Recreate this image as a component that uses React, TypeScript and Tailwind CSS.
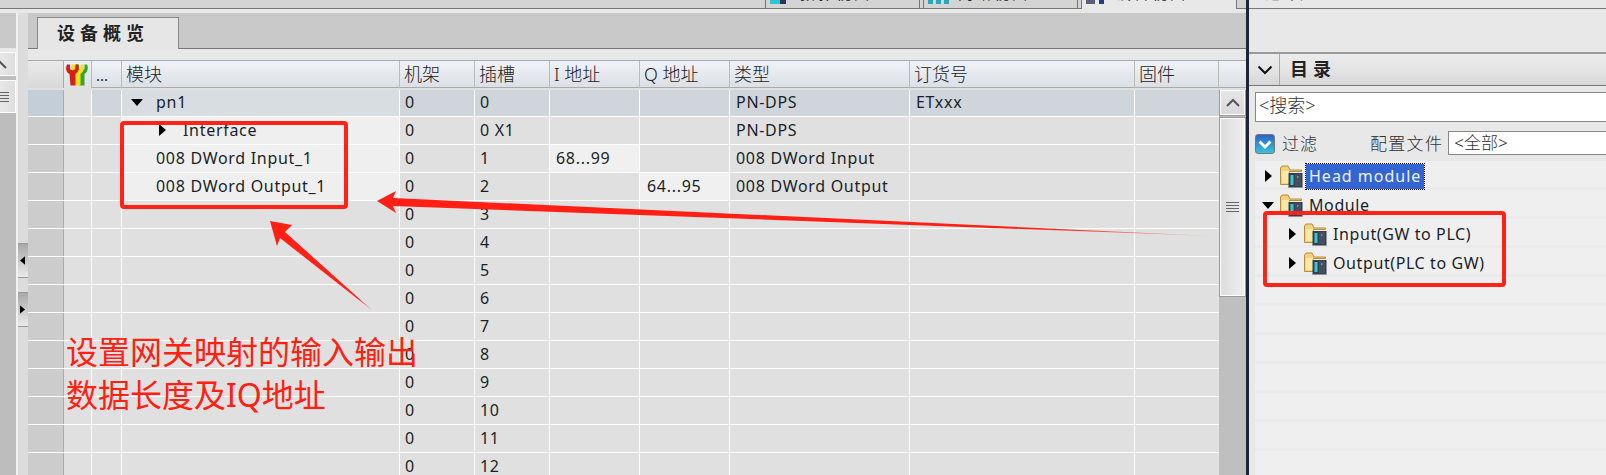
import React from "react";

const COLS = "grid-cols-[36px_28px_30px_278px_75px_75px_90px_90px_180px_225px_84px]";
const LATIN = "font-['Noto_Sans','Noto_Sans_CJK_SC',sans-serif]";

function Tri({ dir, className = "" }: { dir: "right" | "down" | "left"; className?: string }) {
  const pts = dir === "right" ? "0,0 7,6 0,12" : dir === "left" ? "7,0 0,6 7,12" : "0,0 12,0 6,7";
  const w = dir === "down" ? 12 : 7;
  const h = dir === "down" ? 7 : 12;
  return (
    <svg width={w} height={h} viewBox={`0 0 ${w} ${h}`} className={`shrink-0 ${className}`}>
      <polygon points={pts} fill="#000" />
    </svg>
  );
}

function FolderIcon({ className = "" }: { className?: string }) {
  return (
    <svg width="23" height="23" viewBox="0 0 23 23" className={`shrink-0 ${className}`}>
      <path d="M0.5 3 L0.5 19.5 L9 19.5 L9 6.5 L21.5 6.5 L21.5 5 L10 5 L8 1 L2 1 Z" fill="#f3d27c" stroke="#b98d3c" />
      <rect x="2" y="6" width="7" height="12" fill="#fbe7a8" />
      <rect x="8.5" y="8" width="14" height="14.5" fill="#343f50" />
      <rect x="8.5" y="22" width="14" height="1" fill="#8b93a0" />
      <rect x="10.5" y="10" width="3" height="10" fill="#35c6d8" />
      <rect x="15" y="9" width="6" height="12" fill="#454f60" />
      <rect x="17" y="11" width="1.5" height="2" fill="#7d8796" />
    </svg>
  );
}

function Wrench({ color, dx }: { color: string; dx: number }) {
  return (
    <path
      transform={`translate(${dx} 0)`}
      d="M1 0.5 C-0.5 3 -0.5 8 3.5 10 L4.5 21.5 L9.5 21.5 L9.5 10 C13 8 13.5 3 12 0.5 L9.5 0.5 L9.5 5 L6.5 6.5 L4 5 L4 0.5 Z"
      fill={color}
    />
  );
}

function WrenchIcon() {
  return (
    <svg width="22" height="23" viewBox="0 0 22 23" className="-ml-[2px]">
      <Wrench color="#35a62d" dx={9} />
      <Wrench color="#f4dc1e" dx={5} />
      <Wrench color="#d3201a" dx={0} />
    </svg>
  );
}

function ChevronUp({ w = 14 }: { w?: number }) {
  return (
    <svg width={w} height="9" viewBox="0 0 14 9">
      <path d="M1 8 L7 2 L13 8" fill="none" stroke="#555" strokeWidth="2" />
    </svg>
  );
}

function Grip() {
  return (
    <div className="flex flex-col gap-[2px] w-[13px]">
      <div className="h-px bg-[#666]" />
      <div className="h-px bg-[#666]" />
      <div className="h-px bg-[#666]" />
      <div className="h-px bg-[#666]" />
    </div>
  );
}

function TopTab({ w, label, active, icon }: { w: string; label: string; active?: boolean; icon: React.ReactNode }) {
  return (
    <div className={`${w} h-[9px] overflow-hidden flex items-start border-x border-[#777] ${active ? "bg-[#e8e8e8]" : "bg-[#d4d4d4] border-b"}`}>
      <div className="pl-[4px] shrink-0 w-[34px]">{icon}</div>
      <span className="text-[15px] leading-[18px] tracking-[3px] text-[#222] -mt-[16px] whitespace-nowrap">{label}</span>
    </div>
  );
}

type Row = { slot: string; mod?: React.ReactNode; i?: string; q?: string; type?: string };

const rows: Row[] = [
  { slot: "0 X1", mod: <span className="flex items-center pl-[37px] gap-[17px]"><Tri dir="right" /><span>Interface</span></span>, type: "PN-DPS" },
  { slot: "1", mod: <span className="pl-[34px]">008 DWord Input_1</span>, i: "68...99", type: "008 DWord Input" },
  { slot: "2", mod: <span className="pl-[34px]">008 DWord Output_1</span>, q: "64...95", type: "008 DWord Output" },
  ...["3", "4", "5", "6", "7", "8", "9", "10", "11", "12"].map((s) => ({ slot: s })),
];

const headers = ["模块", "机架", "插槽", "I 地址", "Q 地址", "类型", "订货号", "固件"];

function HeaderRow() {
  return (
    <div className={`grid ${COLS} h-[28px] border-y border-[#aaa] bg-gradient-to-b from-[#f0f3f7] to-[#dbe0e6]`}>
      <div className="bg-gradient-to-b from-[#eaeaea] to-[#d8d8d8] border-r border-[#aaa]" />
      <div className="border-r border-[#bbb] flex items-center justify-center bg-gradient-to-b from-[#eef0f2] to-[#dde0e4]"><WrenchIcon /></div>
      <div className="border-r border-[#bbb] flex items-center pl-[4px] text-[15px] text-[#222]">...</div>
      {headers.map((h, i) => (
        <div key={i} className="border-r border-[#bbb] flex items-center pl-[4px] pb-[1px] text-[18px] font-light text-[#222] whitespace-nowrap">
          {h}
        </div>
      ))}
    </div>
  );
}

function Cell({ className = "", children }: { className?: string; children?: React.ReactNode }) {
  return <div className={`border-r border-white flex items-center pl-[5px] pb-[2px] whitespace-nowrap overflow-hidden ${className}`}>{children}</div>;
}

function BodyRows() {
  const txt = "text-[16px] tracking-[0.7px] text-[#1a1f28]";
  return (
    <div className={`flex-1 min-w-0 overflow-hidden ${txt}`}>
      <div className={`grid ${COLS} h-[27px] border-b border-[#fff]`}>
        <div className="bg-[#c3ced8] border-r border-[#aaa]" />
        <div className="bg-[#e0e0e0] border-r border-white" />
        <div className="bg-[#cfd5da] border-r border-white" />
        <div className="bg-[#d8dde2] border-r border-white flex items-center pl-[9px] pb-[2px] gap-[13px]"><Tri dir="down" /><span>pn1</span></div>
        <Cell className="bg-[#cfd5da]">0</Cell>
        <Cell className="bg-[#cfd5da]">0</Cell>
        <Cell className="bg-[#cfd5da]" />
        <Cell className="bg-[#cfd5da]" />
        <Cell className="bg-[#cfd5da] pl-[6px]">PN-DPS</Cell>
        <Cell className="bg-[#cfd5da] pl-[6px]">ETxxx</Cell>
        <Cell className="bg-[#cfd5da] border-r-0" />
      </div>
      {rows.map((r, idx) => (
        <div key={idx} className={`grid ${COLS} h-[28px] border-b border-white`}>
          <div className="bg-[#cccccc] border-r border-[#aaa]" />
          <div className="bg-[#e0e0e0] border-r border-white" />
          <div className="bg-[#e0e0e0] border-r border-white" />
          <div className={`${idx < 3 ? "bg-[#efefef]" : "bg-[#e0e0e0]"} border-r border-white flex items-center pb-[2px] overflow-hidden whitespace-nowrap`}>{r.mod}</div>
          <Cell className="bg-[#e0e0e0]">0</Cell>
          <Cell className="bg-[#e0e0e0]">{r.slot}</Cell>
          <Cell className={r.i ? "bg-[#f0f0f0] pl-[6px]" : "bg-[#e0e0e0]"}>{r.i}</Cell>
          <Cell className={r.q ? "bg-[#f0f0f0] pl-[7px]" : "bg-[#e0e0e0]"}>{r.q}</Cell>
          <Cell className="bg-[#e0e0e0] pl-[6px]">{r.type}</Cell>
          <Cell className="bg-[#e0e0e0]" />
          <Cell className="bg-[#e0e0e0] border-r-0" />
        </div>
      ))}
    </div>
  );
}

function TableScrollbar() {
  return (
    <div className="w-[27px] shrink-0 bg-[#bfbfbf] flex flex-col -mt-px">
      <div className="h-[27px] bg-gradient-to-b from-[#e6e6e6] to-[#d9d9d9] border border-[#999] outline outline-1 -outline-offset-2 outline-white flex items-center justify-center mb-[1px]">
        <ChevronUp />
      </div>
      <div className="h-[180px] bg-gradient-to-r from-[#dcdcdc] to-[#efefef] border border-[#999] outline outline-1 -outline-offset-2 outline-white flex items-center justify-center">
        <Grip />
      </div>
    </div>
  );
}

function LeftRail() {
  return (
    <div className="w-[28px] shrink-0 flex self-stretch">
      <div className="w-[16px] bg-[#bdbdbd] flex flex-col">
        <div className="h-[35px] bg-[#c9c9c9]" />
        <div className="h-[4px] bg-[#e8e8e8]" />
        <div className="h-[24px] bg-gradient-to-r from-[#e8e8e8] to-[#dedede] border-y border-r border-white flex items-center overflow-hidden">
          <div className="-ml-[7px]"><ChevronUp /></div>
        </div>
        <div className="h-[4px]" />
        <div className="h-[33px] bg-gradient-to-r from-[#e8e8e8] to-[#dedede] border-y border-r border-white flex items-center overflow-hidden">
          <div className="-ml-[4px]"><Grip /></div>
        </div>
      </div>
      <div className="w-[2px] bg-[#f2f2f2]" />
      <div className="w-[10px] bg-[#dcdcdc] flex flex-col pt-[230px]">
        <div className="h-[35px] bg-gradient-to-b from-[#a8a8a8] to-[#ebebeb] border-y border-[#999] flex items-center pl-[2px]"><Tri dir="left" className="w-[5px] h-[9px]" /></div>
        <div className="h-[14px]" />
        <div className="h-[35px] bg-gradient-to-b from-[#a8a8a8] to-[#ebebeb] border-y border-[#999] flex items-center pl-[2px]"><Tri dir="right" className="w-[5px] h-[9px]" /></div>
      </div>
    </div>
  );
}

function TreeRow({ children }: { children?: React.ReactNode }) {
  return <div className="h-[29px] shrink-0 border-b-[3px] border-[#eaeaea] flex items-center pt-[4px] whitespace-nowrap">{children}</div>;
}

function RightPanel() {
  return (
    <div className="flex-1 min-w-0 bg-[#e8e8e8] flex flex-col">
      <div className="h-[9px] border-b border-[#777] overflow-hidden pl-[16px]">
        <div className="text-[18px] leading-[20px] -mt-[18px] tracking-[2px] text-[#222]">选项</div>
      </div>
      <div className="h-[43px]" />
      <div className="h-[2px] bg-[#999]" />
      <div className="h-[32px] border-b border-[#777] bg-gradient-to-b from-[#ececec] via-[#e4e4e4] to-[#d6d6d6] flex items-stretch">
        <div className="w-[31px] border-r border-[#aaa] flex items-center justify-center pl-[2px]">
          <svg width="16" height="10" viewBox="0 0 16 10"><path d="M1.5 1.5 L8 8 L14.5 1.5" fill="none" stroke="#111" strokeWidth="2" /></svg>
        </div>
        <div className="pl-[10px] flex items-center text-[18px] font-bold tracking-[5px] text-[#222]">目录</div>
      </div>
      <div className="pl-[6px] pt-[6px] flex flex-col flex-1 min-h-0 overflow-hidden">
        <div className="h-[30px] shrink-0 bg-white border border-[#888] border-r-0 flex items-center pl-[3px] pb-[3px] text-[18px] font-light text-[#333]">&lt;搜索&gt;</div>
        <div className="h-[39px] shrink-0 flex items-center pt-[5px]">
          <div className="w-[20px] h-[20px] rounded-[3px] bg-gradient-to-b from-[#2c62c4] to-[#3cc0dc] border border-[#777] flex items-center justify-center shrink-0">
            <svg width="14" height="11" viewBox="0 0 14 11"><path d="M1.5 2.5 L7 8 L12.5 2.5" fill="none" stroke="#fff" strokeWidth="3" /></svg>
          </div>
          <span className="ml-[7px] text-[17px] font-light tracking-[1px] text-[#333]">过滤</span>
          <span className="ml-[52px] text-[17px] font-light tracking-[1.3px] text-[#333]">配置文件</span>
          <div className="ml-[5px] flex-1 h-[24px] -mt-[2px] bg-white border border-[#888] border-r-0 flex items-center pl-[5px] text-[17px] font-light text-[#333]">&lt;全部&gt;</div>
        </div>
        <div className="flex-1 min-h-0 overflow-hidden bg-[#efefef] text-[16px] tracking-[0.6px] text-[#1a1f28]">
          <TreeRow>
            <Tri dir="right" className="ml-[10px]" />
            <FolderIcon className="ml-[8px]" />
            <span className="ml-[3px] h-[25px] px-[3px] bg-[#3264d2] text-[#eef2ff] tracking-[1px] outline-dotted outline-1 outline-black flex items-center">Head module</span>
          </TreeRow>
          <TreeRow>
            <Tri dir="down" className="ml-[7px]" />
            <FolderIcon className="ml-[6px]" />
            <span className="ml-[6px]">Module</span>
          </TreeRow>
          <TreeRow>
            <Tri dir="right" className="ml-[34px]" />
            <FolderIcon className="ml-[8px]" />
            <span className="ml-[6px]">Input(GW to PLC)</span>
          </TreeRow>
          <TreeRow>
            <Tri dir="right" className="ml-[34px]" />
            <FolderIcon className="ml-[8px]" />
            <span className="ml-[6px]">Output(PLC to GW)</span>
          </TreeRow>
          {[0, 1, 2, 3, 4, 5, 6].map((i) => <TreeRow key={i} />)}
        </div>
      </div>
    </div>
  );
}

function Annotations() {
  return (
    <div className="absolute inset-0 pointer-events-none">
      <svg width="1606" height="475" viewBox="0 0 1606 475" className="absolute inset-0">
        <defs>
          <linearGradient id="fade" x1="377" y1="0" x2="1212" y2="0" gradientUnits="userSpaceOnUse">
            <stop offset="0.8" stopColor="#ff1f14" />
            <stop offset="1" stopColor="#ff1f14" stopOpacity="0.25" />
          </linearGradient>
          <linearGradient id="fade2" x1="270" y1="221" x2="373" y2="311" gradientUnits="userSpaceOnUse">
            <stop offset="0.85" stopColor="#ff1f14" />
            <stop offset="1" stopColor="#ff1f14" stopOpacity="0.3" />
          </linearGradient>
        </defs>
        <polygon points="377,201 396,191 393,198 1212,236 393,206 396,213" fill="url(#fade)" />
        <polygon points="270,221 292,225 285,232 373,311 280,238 277,246" fill="url(#fade2)" />
      </svg>
      <div className="absolute left-[120px] top-[121px] w-[228px] h-[88px] border-[4px] border-[#ff2317] rounded-[4px]" />
      <div className="absolute left-[1263px] top-[211px] w-[243px] h-[76px] border-[4px] border-[#ff2317] rounded-[4px]" />
      <div className="absolute left-[66px] top-[330px] text-[32px] leading-[43px] text-[#ff2012] whitespace-nowrap">
        <div>设置网关映射的输入输出</div>
        <div>数据长度及IQ地址</div>
      </div>
    </div>
  );
}

export default function App() {
  return (
    <div className={`relative w-[1606px] h-[475px] overflow-hidden flex bg-[#e8e8e8] ${LATIN}`}>
      <div className="w-[1246px] shrink-0 flex flex-col">
        <div className="h-[9px] flex justify-end bg-[#d4d4d4] border-b border-[#777] pr-[9px] gap-[3px]">
          <TopTab
            w="w-[155px]"
            label="拓扑视图"
            icon={
              <div className="flex h-[4px] w-[16px]">
                <div className="w-[10px] bg-[#2fc4d4]" />
                <div className="w-[6px] bg-[#27345a]" />
              </div>
            }
          />
          <TopTab
            w="w-[155px]"
            label="网络视图"
            icon={
              <div className="flex gap-[3px] h-[4px]">
                <div className="w-[5px] bg-[#2aa6b8]" />
                <div className="w-[5px] bg-[#2aa6b8]" />
                <div className="w-[5px] bg-[#2aa6b8]" />
              </div>
            }
          />
          <TopTab
            w="w-[156px]"
            label="设备视图"
            active
            icon={
              <div className="flex gap-[4px] h-[4px]">
                <div className="w-[9px] bg-[#5a6078]" />
                <div className="w-[5px] bg-[#1d3f80]" />
              </div>
            }
          />
        </div>
        <div className="h-[4px] bg-[#e8e8e8]" />
        <div className="flex-1 min-h-0 flex">
          <LeftRail />
          <div className="flex-1 min-w-0 flex flex-col">
            <div className="h-[36px] bg-[#c9c9c9] border-b border-[#777] flex pl-[9px] pt-[4px]">
              <div className="w-[142px] h-[32px] bg-[#e6e6e6] border border-b-0 border-[#888] flex items-center pl-[19px] text-[18px] font-bold tracking-[5px] text-[#222]">设备概览</div>
            </div>
            <div className="h-[11px] bg-[#e8e8e8]" />
            <div className="flex">
              <div className="flex-1 min-w-0"><HeaderRow /></div>
              <div className="w-[27px] h-[28px] shrink-0 border-y border-[#aaa] bg-gradient-to-b from-[#f0f3f7] to-[#dbe0e6]" />
            </div>
            <div className="h-[2px] bg-[#e0e0e0]" />
            <div className="flex-1 min-h-0 flex overflow-hidden">
              <BodyRows />
              <TableScrollbar />
            </div>
          </div>
        </div>
      </div>
      <div className="w-[3px] shrink-0 bg-[#1f2535]" />
      <RightPanel />
      <Annotations />
    </div>
  );
}
